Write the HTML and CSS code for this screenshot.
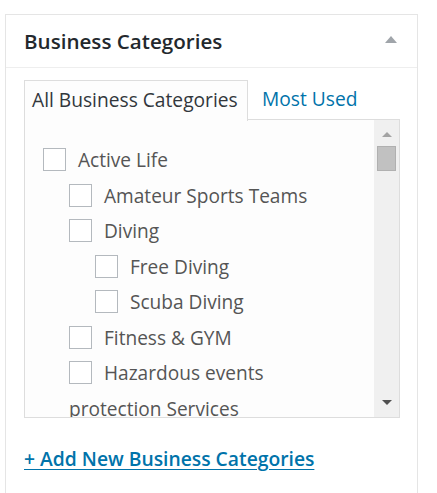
FILE: index.html
```html
<!DOCTYPE html>
<html>
<head>
<meta charset="utf-8">
<link rel="stylesheet" href="styles.css">
</head>
<body>
<div class="postbox">
  <div class="hndle">
    <h2 class="title">Business Categories</h2>
    <span class="toggle"></span>
  </div>
  <div class="inside">
    <ul class="tabs">
      <li class="tab active">All Business Categories</li>
      <li class="tab"><a href="#">Most Used</a></li>
    </ul>
    <div class="panel">
      <div class="list-wrap">
        <ul class="checklist">
          <li class="lvl0"><label><input type="checkbox"> Active Life</label></li>
          <li class="lvl1"><label><input type="checkbox"> Amateur Sports Teams</label></li>
          <li class="lvl1"><label><input type="checkbox"> Diving</label></li>
          <li class="lvl2"><label><input type="checkbox"> Free Diving</label></li>
          <li class="lvl2"><label><input type="checkbox"> Scuba Diving</label></li>
          <li class="lvl1"><label><input type="checkbox"> Fitness &amp; GYM</label></li>
          <li class="lvl1"><label><input type="checkbox"> Hazardous events protection Services</label></li>
        </ul>
      </div>
      <div class="scrollbar">
        <span class="arrow up"></span>
        <span class="thumb"></span>
        <span class="track"></span>
        <span class="arrow down"></span>
      </div>
    </div>
    <a class="add-new" href="#">+ Add New Business Categories</a>
  </div>
</div>
</body>
</html>
```

FILE: styles.css
```css
html, body {
  margin: 0;
  padding: 0;
  background: #ffffff;
}
body {
  font-family: "Open Sans", "Noto Sans", sans-serif;
  color: #555555;
}
.postbox {
  box-sizing: border-box;
  margin: 14px 0 0 5px;
  width: 413px;
  height: 479px;
  border: 1px solid #e5e5e5;
  border-bottom: none;
  background: #ffffff;
}
.hndle {
  height: 52px;
  border-bottom: 1px solid #eeeeee;
  display: flex;
  align-items: center;
  justify-content: space-between;
  padding: 0 20px 0 18px;
}
.title {
  margin: 0;
  font-size: 20.6px;
  font-weight: 600;
  color: #23282d;
  letter-spacing: 0;
}
.toggle {
  width: 0;
  height: 0;
  border-left: 6px solid transparent;
  border-right: 6px solid transparent;
  border-bottom: 7px solid #a0a5aa;
  margin-top: -3px;
}
.inside {
  padding: 12px 17px 0 18px;
}
.tabs {
  list-style: none;
  margin: 0;
  padding: 0;
  display: flex;
  height: 40px;
}
.tab {
  box-sizing: border-box;
  height: 40px;
  font-size: 19.2px;
  line-height: 38px;
  padding: 0 0 0 14px;
}
.tab.active {
  width: 224px;
  padding: 0 0 0 7px;
  border: 1px solid #dddddd;
  border-bottom: none;
  background: #fdfdfd;
  color: #32373c;
  position: relative;
  z-index: 1;
  height: 41px;
}
.tab a {
  color: #0073aa;
  text-decoration: none;
}
.panel {
  margin-top: -1px;
  box-sizing: border-box;
  height: 299px;
  border: 1px solid #dddddd;
  background: #fdfdfd;
  display: flex;
}
.list-wrap {
  flex: 1;
  overflow: hidden;
}
.checklist {
  list-style: none;
  margin: 0;
  padding: 23px 30px 0 18px;
}
.checklist li {
  font-size: 19.1px;
  line-height: 35.5px;
  margin: 0;
}
.checklist .lvl1 { padding-left: 26px; }
.checklist .lvl2 { padding-left: 52px; }
.checklist input {
  -webkit-appearance: none;
  appearance: none;
  box-sizing: border-box;
  width: 23px;
  height: 23px;
  margin: 0 7px 0 0;
  border: 1px solid #b4b9be;
  background: #ffffff;
  vertical-align: middle;
  position: relative;
  top: -2px;
}
.scrollbar {
  width: 25px;
  background: #f0f0f0;
  display: flex;
  flex-direction: column;
  align-items: center;
}
.arrow {
  display: block;
  width: 0;
  height: 0;
  border-left: 5px solid transparent;
  border-right: 5px solid transparent;
}
.arrow.up {
  margin-top: 12px;
  border-bottom: 5px solid #a3a3a3;
}
.arrow.down {
  margin-bottom: 12px;
  border-top: 5px solid #505050;
}
.thumb {
  display: block;
  box-sizing: border-box;
  width: 19px;
  height: 25px;
  margin-top: 9px;
  background: #c1c1c1;
  border: 1px solid #b0b0b0;
}
.track {
  flex: 1;
}
.add-new {
  display: inline-block;
  margin-top: 27px;
  font-size: 19.3px;
  font-weight: 600;
  color: #0073aa;
  text-decoration: underline;
  text-underline-offset: 3px;
}
```
